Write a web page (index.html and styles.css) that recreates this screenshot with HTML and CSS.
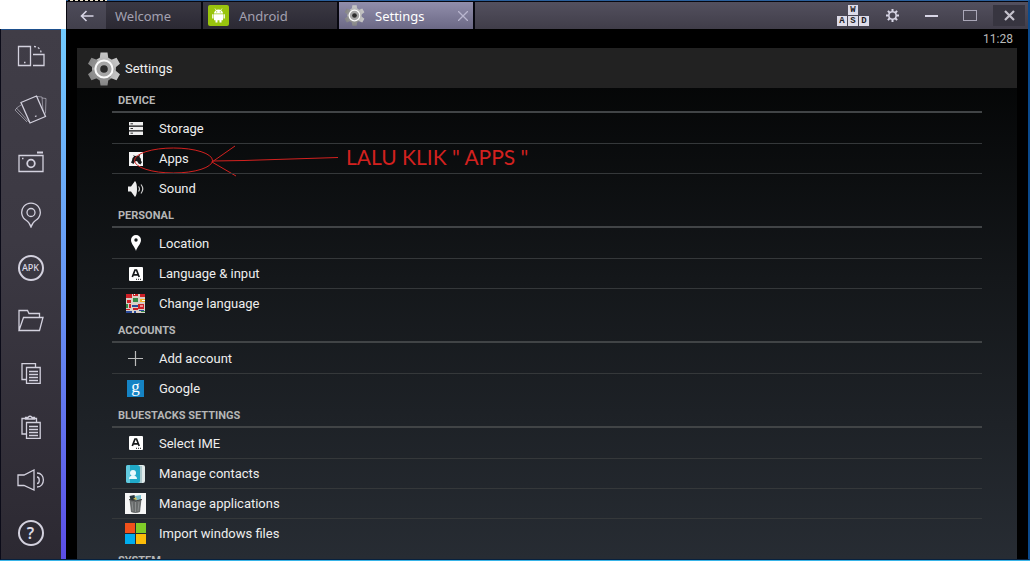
FILE: index.html
```html
<!DOCTYPE html>
<html lang="en">
<head>
    <meta charset="UTF-8">
    <meta name="viewport" content="width=device-width, initial-scale=1.0">
    <title>Settings</title>
    <link rel="stylesheet" href="styles.css">
</head>
<body>
    <svg class="defs" width="0" height="0" aria-hidden="true">
        <defs>
            <linearGradient id="metal" x1="0" y1="0" x2="0" y2="1">
                <stop offset="0" stop-color="#c8c8c8"/>
                <stop offset="1" stop-color="#858585"/>
            </linearGradient>
            <symbol id="gear" viewBox="0 0 32 34">
                <g fill="url(#metal)">
                    <circle cx="16" cy="17" r="12"/>
                    <path d="M12.500 0.500h7l1 7h-9zM12.500 33.500h7l1-7h-9z"/>
                    <path d="M12.500 0.500h7l1 7h-9zM12.500 33.500h7l1-7h-9z" transform="rotate(60 16 17)"/>
                    <path d="M12.500 0.500h7l1 7h-9zM12.500 33.500h7l1-7h-9z" transform="rotate(120 16 17)"/>
                </g>
                <circle cx="16" cy="17" r="8.600" fill="#a6a6a6" stroke="#fafafa" stroke-width="2"/>
                <circle cx="16" cy="17" r="3.800" fill="#2c2c2c"/>
            </symbol>
            <symbol id="letter-box" viewBox="0 0 14 14">
                <rect width="14" height="14" rx="1" fill="#fff"/>
                <path d="M3.300 10L6 3h1.500l2.700 7M4.500 7.800h4.500" fill="none" stroke="#15181a" stroke-width="1.700"/>
                <path d="M7 12.300h5" stroke="#15181a" stroke-width="1" stroke-dasharray="1 1"/>
            </symbol>
        </defs>
    </svg>

    <header class="titlebar">
        <button class="back" aria-label="Back">
            <svg width="14" height="12" viewBox="0 0 14 12" fill="none" stroke="#d6d4e4" stroke-width="1.600"><path d="M13.500 6H1.500M6.500 1L1.500 6l5 5"/></svg>
        </button>
        <button class="tab tab-welcome">Welcome</button>
        <button class="tab">
            <svg class="tab-icon" width="21" height="21" viewBox="0 0 21 21">
                <rect width="21" height="21" rx="2" fill="#99c40e"/>
                <path d="M6 8.500a4.500 4 0 0 1 9 0zM6 9.200h9v6H6zM4.200 9.200h1.300v4.300H4.200zM15.500 9.200h1.300v4.300h-1.300zM7.500 14h2v3.500h-2zM11.500 14h2v3.500h-2z" fill="#fff"/>
                <path d="M7 3.500l1.300 2M14 3.500l-1.300 2" stroke="#fff" stroke-width=".7"/>
                <circle cx="8.700" cy="6.800" r=".6" fill="#99c40e"/><circle cx="12.300" cy="6.800" r=".6" fill="#99c40e"/>
            </svg>
            <span>Android</span>
        </button>
        <button class="tab tab-active">
            <svg class="tab-icon" width="21" height="21"><use href="#gear"/></svg>
            <span>Settings</span>
            <svg class="tab-close" width="10" height="10" viewBox="0 0 10 10" stroke="#b9b6cf" stroke-width="1.300"><path d="M0 0l10 10M10 0L0 10"/></svg>
        </button>
        <div class="controls">
            <button class="control keys" aria-label="Keyboard controls">
                <span>W</span>
                <span class="key-row"><span>A</span><span>S</span><span>D</span></span>
            </button>
            <button class="control" aria-label="Preferences">
                <svg width="13" height="13" viewBox="0 0 13 13" fill="none" stroke="#d8d6e6">
                    <circle cx="6.500" cy="6.500" r="3.700" stroke-width="1.600"/>
                    <path d="M6.500 0v2.500M6.500 10.500V13M0 6.500h2.500M10.500 6.500H13M1.900 1.900l1.800 1.800M9.300 9.300l1.800 1.800M11.100 1.900L9.300 3.700M3.700 9.300l-1.800 1.800" stroke-width="2"/>
                </svg>
            </button>
            <button class="control" aria-label="Minimize">
                <svg width="13" height="2"><rect width="13" height="2" fill="#d8d6e6"/></svg>
            </button>
            <button class="control" aria-label="Maximize">
                <svg width="14" height="11"><rect x=".5" y=".5" width="13" height="10" fill="none" stroke="#aaa7b8"/></svg>
            </button>
            <button class="control control-close" aria-label="Close">
                <svg width="11" height="11" viewBox="0 0 11 11" stroke="#c4c2cc" stroke-width="2.200"><path d="M1 1l9 9M10 1l-9 9"/></svg>
            </button>
        </div>
    </header>

    <div class="window">
        <aside class="sidebar">
            <button class="tool" aria-label="Rotate">
                <svg width="28" height="22" viewBox="0 0 28 22"><path d="M1.500 1.500h12v19h-12zM16 9.500h11v11H16" /><path d="M17 1.500c4 0 7 3 7 6" stroke-dasharray="2 2"/><path d="M7 17.500h1.500"/></svg>
            </button>
            <button class="tool" aria-label="Shake">
                <svg width="34" height="30" viewBox="0 0 34 30"><path d="M7 8.500L22.500 2l9 20.500L16 29z"/><path d="M21 22.500l1.500-.6"/><path d="M23 2.500l5 .5 1 14M28 4l4 .5-.5 15M7 11l-4.500 3L15 28M3 14l-2 2 12 12" opacity=".55" stroke-width="1"/></svg>
            </button>
            <button class="tool" aria-label="Camera">
                <svg width="26" height="22" viewBox="0 0 26 22"><path d="M1 4.500h24v16H1z"/><path d="M19 1.500h6" stroke-width="2"/><circle cx="13" cy="12.500" r="3.800" stroke-width="1.800"/><path d="M4 7.500h1.500"/></svg>
            </button>
            <button class="tool" aria-label="Location">
                <svg width="22" height="26" viewBox="0 0 22 26"><path d="M11 25c-1-3-2-5-4.500-6.500a9.300 9.300 0 1 1 9 0C13 20 12 22 11 25z"/><circle cx="11" cy="10.500" r="4"/></svg>
            </button>
            <button class="tool" aria-label="Install APK">
                <span class="ring ring-apk">APK</span>
            </button>
            <button class="tool" aria-label="Folder">
                <svg width="26" height="23" viewBox="0 0 26 23"><path d="M1 21.500V1.500h8.500l1.500 3h10.500v4M1 21.500L5.500 8.500H25l-3.500 13z"/></svg>
            </button>
            <button class="tool" aria-label="Copy">
                <svg width="20" height="21" viewBox="0 0 20 21"><path d="M5 16.500H1v-16h13.500V4M5.500 4.500h13.700v16H5.500zM8 8.500h9M8 11.500h9M8 14.500h9M8 17.500h9"/></svg>
            </button>
            <button class="tool" aria-label="Paste">
                <svg width="20" height="24" viewBox="0 0 20 24"><path d="M5 19H1V3.500h3.500M13 3.500h2.500V7M4.500 4V2.500H7q2-2.500 4 0h2.500V4zM5.500 7.500h13.700v16H5.500zM8 11.500h9M8 14.500h9M8 17.500h9M8 20.500h9"/></svg>
            </button>
            <button class="tool" aria-label="Volume">
                <svg width="28" height="22" viewBox="0 0 28 22"><path d="M1 6v10.500h6L17 21V1L7 6z"/><path d="M20 8c3 0 3 6.500 0 6.500M20 4c8.500 0 8.500 14 0 14"/></svg>
            </button>
            <button class="tool" aria-label="Help">
                <span class="ring ring-help">?</span>
            </button>
        </aside>
        <div class="accent"></div>

        <main class="screen">
            <div class="status"><time>11:28</time></div>
            <div class="app">
                <div class="app-bar">
                    <svg width="32" height="34"><use href="#gear"/></svg>
                    <h1>Settings</h1>
                </div>
                <div class="list">
                    <section>
                        <h2>DEVICE</h2>
                        <a class="row" href="#"><span class="icon">
                            <svg width="14" height="13" viewBox="0 0 14 13"><path d="M0 0h14v3.500H0zM0 4.700h14v3.500H0zM0 9.400h14V13H0z" fill="#eee"/><path d="M1.500 1.800H4M1.500 6.500H4M1.500 11.200H4" stroke="#333"/></svg>
                        </span>Storage</a>
                        <a class="row" href="#"><span class="icon">
                            <svg width="14" height="14" viewBox="0 0 14 14"><rect width="14" height="14" fill="#f4f4f4"/><path d="M3 8.500q0-3 2-4L4 3l2 1q1.500-.5 3 0l2-1.500L10.500 5q2 1.500 1.500 4l1 1-1.500 2.500-2-1Q8 8 6 9.500L4.500 12 2 10.500z" fill="#17191a"/></svg>
                        </span>Apps
                            <svg class="mark" width="206" height="36" viewBox="0 0 206 36" fill="none" stroke="#d3211f"><ellipse cx="39.500" cy="18.500" rx="39" ry="12.500"/><path d="M101 4L78 20l24 14M78 19l32-.5 94-3"/></svg>
                            <span class="note">LALU KLIK " APPS "</span>
                        </a>
                        <a class="row" href="#"><span class="icon">
                            <svg width="16" height="16" viewBox="0 0 16 16"><path d="M0 5.500h3L7 0q2 2 2 8t-2 8L3 10.500H0z" fill="#eee"/><path d="M10.500 5.500q2 2.500 0 5M13 3.500q3.500 4.500 0 9" fill="none" stroke="#ccc" stroke-width="1.200"/></svg>
                        </span>Sound</a>
                    </section>
                    <section>
                        <h2>PERSONAL</h2>
                        <a class="row" href="#"><span class="icon">
                            <svg width="10" height="16" viewBox="0 0 10 16"><path d="M5 16C4 12 0 9 0 5a5 5 0 0 1 10 0c0 4-4 7-5 11z" fill="#fff"/><circle cx="5" cy="5" r="1.700" fill="#15181a"/></svg>
                        </span>Location</a>
                        <a class="row" href="#"><span class="icon"><svg width="14" height="14"><use href="#letter-box"/></svg></span>Language &amp; input</a>
                        <a class="row" href="#"><span class="icon">
                            <svg width="19" height="19" viewBox="0 0 19 19">
                                <rect width="19" height="19" fill="#d9cfc8"/>
                                <path d="M0 0h6v4H0zM7 0h5v2H7zM14 0h5v3h-5zM1 6h4v3H1zM12 10h6v5h-6zM3 10h2v4H3zM0 15h4v1H0zM7 14h5v2H7z" fill="#cf2027"/>
                                <path d="M7 4h5v4H7zM0 10h2v4H0zM15 17h4v1h-4z" fill="#368b46"/>
                                <path d="M14 5h5v3h-5z" fill="#efb529"/>
                                <path d="M6 11h6v2H6zM0 17h6v2H0zM13 16h5v1h-5zM8 17h2v2H8z" fill="#294a9b"/>
                                <path d="M8 0l1 1M14 12h3M16 6.500h3" stroke="#fff"/>
                            </svg>
                        </span>Change language</a>
                    </section>
                    <section>
                        <h2>ACCOUNTS</h2>
                        <a class="row" href="#"><span class="icon">
                            <svg width="15" height="15" viewBox="0 0 15 15" stroke="#bbb" stroke-width="1.200"><path d="M7.500 0v15M0 7.500h15"/></svg>
                        </span>Add account</a>
                        <a class="row" href="#"><span class="icon"><span class="google">g</span></span>Google</a>
                    </section>
                    <section>
                        <h2>BLUESTACKS SETTINGS</h2>
                        <a class="row" href="#"><span class="icon"><svg width="14" height="14"><use href="#letter-box"/></svg></span>Select IME</a>
                        <a class="row" href="#"><span class="icon">
                            <svg width="19" height="18" viewBox="0 0 19 18"><rect x="3" width="16" height="18" rx="2" fill="#dfe9ea"/><path d="M13 1h3v17h-3z" fill="#aac8cc"/><path d="M2 0h9q3 0 3 3v13q0 2-2 2H2q-2 0-2-2V2q0-2 2-2z" fill="#20a9c8"/><path d="M2 0h2v18H2q-2 0-2-2V2q0-2 2-2z" fill="#62cadf"/><circle cx="7" cy="8" r="3" fill="#e8f9fc"/><path d="M3 14q0-3.500 4-3.500t4 3.500z" fill="#e8f9fc"/></svg>
                        </span>Manage contacts</a>
                        <a class="row" href="#"><span class="icon">
                            <svg width="21" height="21" viewBox="0 0 21 21"><rect width="21" height="21" fill="#f6f6f6"/><path d="M4.500 6h12l-1.500 13q-4.500 2-9 0z" fill="#686b6b"/><path d="M7 9l1 9M10.500 9v10M14 9l-1 9" stroke="#8a8d8d"/><path d="M4.500 3l5-1 1 5h-5z" fill="#26343a"/><path d="M10 3l6-1v4l-5 2z" fill="#79bfcc"/><path d="M8 6l3-2 1 3z" fill="#d9c95a"/><path d="M4 6.500q6.500 3 13 0" fill="none" stroke="#444"/></svg>
                        </span>Manage applications</a>
                        <a class="row" href="#"><span class="icon">
                            <svg width="21" height="21" viewBox="0 0 21 21"><path d="M0 0h10v10H0z" fill="#f1511b"/><path d="M11 0h10v10H11z" fill="#80cc28"/><path d="M0 11h10v10H0z" fill="#00adef"/><path d="M11 11h10v10H11z" fill="#fbbc09"/></svg>
                        </span>Import windows files</a>
                    </section>
                    <section>
                        <h2>SYSTEM</h2>
                    </section>
                </div>
            </div>
        </main>
    </div>
</body>
</html>
```
FILE: styles.css
```css
* {
    box-sizing: border-box;
}

body {
    margin: 0;
    height: 100vh;
    overflow: hidden;
    display: flex;
    flex-direction: column;
    background: #fff;
    border-bottom: 1px solid #38b4e8;
    font-family: Roboto, "Noto Sans", sans-serif;
}

button {
    border: none;
    padding: 0;
    background: none;
    font: inherit;
    color: inherit;
    cursor: pointer;
}

svg {
    display: block;
    flex: none;
}

.defs {
    position: absolute;
}

/* Title bar */
.titlebar {
    flex: none;
    height: 29px;
    margin-left: 66px;
    display: flex;
    gap: 2px;
    background: #07070f;
    border-top: 1px solid #2a5f9b;
    border-right: 2px solid #0b4a8c;
    padding: 1px 0 0 1px;
    font-family: "Noto Sans", sans-serif;
    font-size: 13px;
    color: #a3a1b0;
}

/* Sliver of the window behind */
.titlebar::before {
    content: "";
    position: absolute;
    top: 0;
    left: 68px;
    width: 39px;
    height: 1px;
    background: repeating-linear-gradient(90deg, #000 0 2px, #efe6cf 2px 5px);
}

.back {
    width: 39px;
    margin-right: -2px;
    display: flex;
    align-items: center;
    justify-content: center;
    background: linear-gradient(#4d4b59, #42404c);
}

.tab {
    width: 134px;
    display: flex;
    align-items: center;
    gap: 10px;
    padding: 0 5px;
    background: linear-gradient(#3a3843, #2b2933);
}

.tab-welcome {
    width: 95px;
    padding: 0 9px;
}

.tab-active {
    background: linear-gradient(#918eab, #6b6885);
    color: #fff;
}

.tab-close {
    margin-left: auto;
}

.controls {
    flex: 1;
    display: flex;
    justify-content: flex-end;
    gap: 7px;
    padding: 3px;
    background: linear-gradient(#53505e, #403d49);
}

.control {
    width: 32px;
    display: flex;
    align-items: center;
    justify-content: center;
}

.control-close {
    background: #373540;
}

.keys {
    flex-direction: column;
    gap: 1px;
    font: bold 9px/10px "Liberation Mono", monospace;
    color: #1c1a24;
}

.keys > span:first-child,
.key-row > span {
    width: 10px;
    height: 10px;
    background: #dddbe8;
}

.key-row {
    display: flex;
    gap: 1px;
}

/* Window body */
.window {
    flex: 1;
    min-height: 0;
    display: flex;
    background: #000;
    border-right: 2px solid #0b4a8c;
    border-bottom: 1px solid #06213f;
    border-left: 1px solid #0b0b18;
}

.sidebar {
    flex: none;
    width: 60px;
    padding-right: 1px;
    background: linear-gradient(#403d47, #3c3943 40%, #2c2932);
    border-top: 1px solid #1d4f8c;
    color: #dcdae6;
}

.tool {
    width: 100%;
    height: 53px;
    display: flex;
    align-items: center;
    justify-content: center;
}

.tool:first-child {
    height: 52px;
}

.tool svg {
    fill: none;
    stroke: #d3d1de;
    stroke-width: 1.3px;
}

.ring {
    width: 26px;
    height: 26px;
    border: 2px solid #d3d1de;
    border-radius: 50%;
    text-align: center;
    font-family: "Noto Sans", sans-serif;
}

.ring-apk {
    font-size: 9px;
    font-weight: 500;
    line-height: 22px;
}

.ring-help {
    font-size: 16px;
    font-weight: 600;
    line-height: 22px;
}

.accent {
    flex: none;
    width: 5px;
    background: linear-gradient(#72cbff, #6795f4 50%, #5b4de6);
}

/* Android screen */
.screen {
    flex: 1;
    padding: 0 11px;
    display: flex;
    flex-direction: column;
}

.status {
    flex: none;
    height: 19px;
    padding: 0 4px;
    text-align: right;
    font-size: 12px;
    line-height: 20px;
    color: #b9b9b9;
}

.app {
    flex: 1;
    min-height: 0;
    overflow: hidden;
    background: linear-gradient(#020303, #14171a 45%, #272c33);
}

.app-bar {
    height: 40px;
    padding: 2px 11px 0;
    display: flex;
    align-items: center;
    gap: 5px;
    background: #222;
}

h1 {
    margin: 0;
    font-size: 13px;
    font-weight: 400;
    line-height: 16px;
    color: #f0f0f0;
}

.list {
    padding: 0 35px;
}

h2 {
    margin: 0;
    height: 25px;
    padding: 0 6px;
    border-bottom: 2px solid #414446;
    font-size: 11px;
    font-weight: 700;
    line-height: 26px;
    color: #b5b6b6;
}

.row {
    position: relative;
    height: 30px;
    display: flex;
    align-items: center;
    font-size: 13px;
    color: #eee;
    text-decoration: none;
}

.row + .row {
    border-top: 1px solid #35383a;
}

.icon {
    width: 47px;
    display: flex;
    justify-content: center;
}

.google {
    width: 17px;
    height: 17px;
    background: #1583c4;
    text-align: center;
    font: 17px/13px "Liberation Serif", serif;
    color: #fff;
}

/* Hand-drawn pointer over the Apps row */
.mark {
    position: absolute;
    top: -2px;
    left: 22px;
    overflow: visible;
}

.note {
    position: absolute;
    top: 0;
    left: 234px;
    font-family: Lato, sans-serif;
    font-size: 21px;
    line-height: 26px;
    color: #d3211f;
    white-space: nowrap;
}
```
